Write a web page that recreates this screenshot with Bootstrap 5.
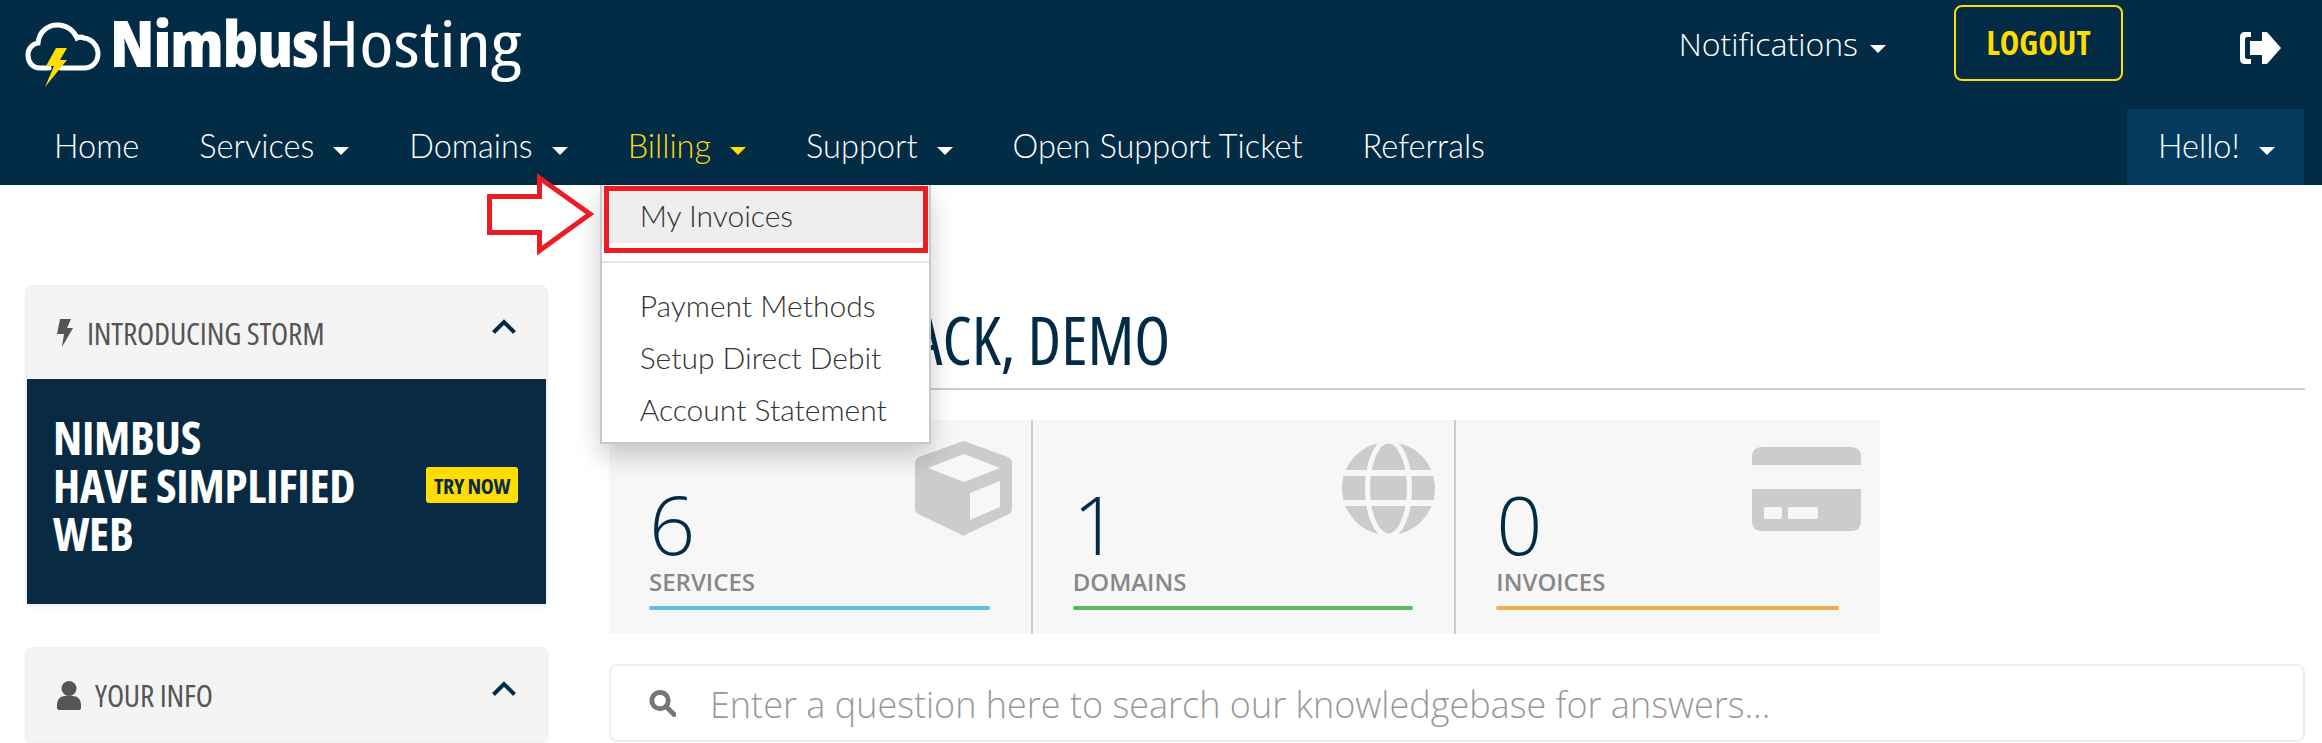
<!DOCTYPE html>
<html lang="en">
<head>
<meta charset="utf-8">
<title>Nimbus Hosting</title>
<link href="https://cdn.jsdelivr.net/npm/bootstrap@5.3.0/dist/css/bootstrap.min.css" rel="stylesheet">
<style>
html,body{height:743px;overflow:hidden;background:#fff}
body{font-family:"Lato","Liberation Sans",sans-serif;position:relative}
.nh-head{background:#022b45;height:185px}
.nh-top{height:108px}
.nh-logo{padding-left:25px;padding-top:22px;gap:9px;height:108px}
.nh-logoname{font-family:"Open Sans",sans-serif;font-stretch:75%;font-size:64px;line-height:60px;color:#fff;margin-top:-9px;white-space:nowrap}
.nh-logobold{display:inline-block;font-weight:800;letter-spacing:-1px;transform:scaleX(1.06);transform-origin:left;margin-right:12px}
.nh-logothin{display:inline-block;font-weight:400;transform:scaleX(1.22);transform-origin:left}
.nh-notify{font-family:"Open Sans",sans-serif;font-weight:300;font-size:32px;color:#fff;text-decoration:none;margin-top:25px;margin-right:68px;line-height:38px}
.nh-notify.dropdown-toggle::after{margin-left:12px}
.dropdown-toggle::after{border-top:8px solid;border-left:8px solid transparent;border-right:8px solid transparent;border-bottom:0;margin-left:19px;vertical-align:3px}
.nh-logout{font-family:"Open Sans",sans-serif;font-stretch:75%;font-weight:700;font-size:33px;color:#ffdd00;border:2px solid #ffdd00;border-radius:8px;width:169px;height:76px;margin-top:5px;margin-right:117px;padding:0;background:transparent;line-height:70px}
.nh-exit{margin-top:32px;margin-right:41px;width:41px;height:32px;display:block}
.nh-navrow{height:77px;padding-left:24px;padding-right:18px}
.nh-navrow .nav-link{font-size:32.5px;font-weight:300;color:#fff;padding:0 30px;line-height:75px;height:76px}
.nh-navrow .nav-link.nh-on{color:#ffdd00}
.nh-navrow .nh-hello{background:#043a5e;width:177px;padding:0 0 0 31px;margin-top:1px;line-height:74px}
.nh-menu.dropdown-menu{left:2px;top:77px;width:331px;height:259px;margin:0;padding:0;border:2px solid #c9c9c9;border-top:0;border-radius:0;box-shadow:0 12px 24px rgba(0,0,0,.2);z-index:20}
.nh-menu .dropdown-item{font-size:30px;font-weight:300;color:#333;padding:0 0 0 38px}
.nh-menu .dropdown-item.nh-hover{background:#eee;height:58px;line-height:60px}
.nh-menu .dropdown-divider{margin:18px 0 0;border-top:2px solid #e5e5e5;opacity:1}
.nh-menu .nh-rest{padding-top:16px}
.nh-menu .nh-rest .dropdown-item{line-height:52px;height:52px}
.nh-body{padding:0 17px 0 25px;gap:61px}
.nh-side{width:523px;flex:none;padding-top:100px}
.nh-card.card{border:2px solid #f0f0f0;border-radius:8px;box-shadow:0 2px 4px rgba(0,0,0,.05);margin-bottom:41px;--bs-card-border-width:0}
.nh-card.card:last-child{margin-bottom:0}
.nh-card .card-header{background:#f4f4f4;height:92px;padding:0 0 0 30px;border:0;border-radius:6px 6px 0 0;font-family:"Open Sans",sans-serif;font-stretch:75%;font-size:31.5px;letter-spacing:-.2px;color:#555;gap:14px}
.nh-chev{margin-left:auto;margin-right:30px;margin-top:-14px}
.nh-banner.card-body{background:#082b43;height:225px;padding:0 28px 14px 26px;color:#fff;border-radius:0}
.nh-bantext{font-family:"Open Sans",sans-serif;font-stretch:75%;font-weight:700;font-size:47px;letter-spacing:-.3px;line-height:48px;white-space:nowrap}
.nh-try{background:#ffdd00;color:#082b43;font-family:"Open Sans",sans-serif;font-stretch:75%;font-weight:700;font-size:22px;letter-spacing:-.4px;width:92px;height:36px;padding:0;line-height:36px;border:0;border-radius:3px;white-space:nowrap}
.nh-main{flex:1;min-width:0}
.nh-title{font-family:"Open Sans",sans-serif;font-stretch:75%;font-weight:400;font-size:68px;line-height:80px;color:#022b45;margin:114px 0 0;border-bottom:2px solid #ccc;height:91px;white-space:nowrap}
.nh-titletext{display:inline-block;transform:scaleX(.97);transform-origin:left;margin-left:25px}
.nh-stats{width:1271px;height:214px;background:#f7f7f7;margin-top:30px;margin-bottom:30px}
.nh-cell{height:214px;padding:0 41px 24px 40px;position:relative;border-right:2px solid #ccc}
.nh-cell:last-child{border-right:0}
.nh-num{font-family:"Open Sans",sans-serif;font-weight:300;font-size:81px;line-height:90px;color:#022b45;margin-bottom:-2px}
.nh-lab{font-family:"Open Sans",sans-serif;font-weight:600;font-size:24px;line-height:30px;color:#888;margin-bottom:9px}
.nh-bar{height:4px;border-radius:2px}
.nh-ico{position:absolute;top:21px;right:19px;fill:#ccc}
.nh-ico.nh-lower{top:27px}
.nh-search{border:2px solid #eee;border-radius:8px;height:78px;padding-left:38px;gap:34px}
.nh-search .form-control{border:0;background:transparent;padding:2px 0 0;font-family:"Open Sans",sans-serif;font-weight:300;font-size:36px;box-shadow:none;height:74px}
.nh-search .form-control::placeholder{color:#999}
.nh-redbox{position:absolute;left:604px;top:186px;width:324px;height:67px;border:5px solid #ed1c24;z-index:30}
.nh-arrow{position:absolute;left:485px;top:172px;z-index:30}
</style>
</head>
<body>
<header class="nh-head">
  <div class="nh-top d-flex">
    <a class="nh-logo d-flex align-items-start text-decoration-none me-auto" href="#">
      <svg width="76" height="66" viewBox="0 0 76 66" aria-hidden="true"><path d="M24 46H15C8 46 3 41 3 33C3 27 7 22 13 21C14 10 23 2 34 3C43 4 49 9 52 16C54 15 57 15 59 16C67 17 73 24 73 32C73 40 67 46 59 46H36" fill="none" stroke="#fff" stroke-width="5" stroke-linecap="round"/><path d="M31 26H42L35 38H42L20 65L29 44H21Z" fill="#ffdd00"/></svg>
      <span class="nh-logoname"><span class="nh-logobold">Nimbus</span><span class="nh-logothin">Hosting</span></span>
    </a>
    <a class="nh-notify dropdown-toggle" href="#">Notifications</a>
    <button class="btn nh-logout" type="button">LOGOUT</button>
    <svg class="nh-exit" viewBox="0 0 41 32" aria-hidden="true"><path d="M11 0H5C2 0 0 2 0 5V27C0 30 2 32 5 32H11V27H7C6 27 5 26 5 25V7C5 6 6 5 7 5H11Z" fill="#fff"/><path d="M10 9H22V0H27L41 16L27 32H22V23H10Z" fill="#fff"/></svg>
  </div>
  <div class="nh-navrow d-flex">
    <ul class="nav me-auto">
      <li class="nav-item"><a class="nav-link" href="#">Home</a></li>
      <li class="nav-item"><a class="nav-link dropdown-toggle" href="#">Services</a></li>
      <li class="nav-item"><a class="nav-link dropdown-toggle" href="#">Domains</a></li>
      <li class="nav-item dropdown">
        <a class="nav-link nh-on dropdown-toggle" href="#">Billing</a>
        <div class="dropdown-menu show nh-menu">
          <a class="dropdown-item nh-hover" href="#">My Invoices</a>
          <hr class="dropdown-divider">
          <div class="nh-rest">
            <a class="dropdown-item" href="#">Payment Methods</a>
            <a class="dropdown-item" href="#">Setup Direct Debit</a>
            <a class="dropdown-item" href="#">Account Statement</a>
          </div>
        </div>
      </li>
      <li class="nav-item"><a class="nav-link dropdown-toggle" href="#">Support</a></li>
      <li class="nav-item"><a class="nav-link" href="#">Open Support Ticket</a></li>
      <li class="nav-item"><a class="nav-link" href="#">Referrals</a></li>
    </ul>
    <a class="nav-link nh-hello dropdown-toggle" href="#">Hello!</a>
  </div>
</header>

<div class="nh-body d-flex">
  <aside class="nh-side">
    <div class="card nh-card">
      <div class="card-header d-flex align-items-center">
        <svg width="16" height="28" viewBox="0 0 16 28" fill="#555" aria-hidden="true"><path d="M3 0H14L10 9H16L5 28L7 15H0Z"/></svg>
        <span>INTRODUCING STORM</span>
        <svg class="nh-chev" width="24" height="15" viewBox="0 0 24 15" fill="none" stroke="#022b45" stroke-width="4" aria-hidden="true"><path d="M1.500 13.500L12 3L22.500 13.500"/></svg>
      </div>
      <div class="card-body nh-banner d-flex align-items-center justify-content-between">
        <div class="nh-bantext">NIMBUS<br>HAVE SIMPLIFIED<br>WEB</div>
        <button class="btn nh-try" type="button">TRY NOW</button>
      </div>
    </div>
    <div class="card nh-card">
      <div class="card-header d-flex align-items-center">
        <svg width="24" height="29" viewBox="0 0 24 29" fill="#555" aria-hidden="true"><circle cx="12" cy="7.500" r="7.500"/><path d="M0 24C0 18 4 15 8 15H16C20 15 24 18 24 24V27C24 28 23 29 22 29H2C1 29 0 28 0 27Z"/></svg>
        <span>YOUR INFO</span>
        <svg class="nh-chev" width="24" height="15" viewBox="0 0 24 15" fill="none" stroke="#022b45" stroke-width="4" aria-hidden="true"><path d="M1.500 13.500L12 3L22.500 13.500"/></svg>
      </div>
    </div>
  </aside>

  <main class="nh-main">
    <h1 class="nh-title"><span class="nh-titletext">WELCOME BACK, DEMO</span></h1>
    <div class="row g-0 nh-stats">
      <div class="col-4 nh-cell d-flex flex-column justify-content-end">
        <svg class="nh-ico" width="97" height="95" viewBox="0 0 97 95" aria-hidden="true"><path fill-rule="evenodd" d="M44 1.500Q48.500-1 53 1.500L93 16Q97 18 97 22V67Q97 71 94 73L52 93Q48.500 96 45 93L3 73Q0 71 0 67V22Q0 18 4 16ZM13 27L49 41L85 27L49 13ZM55 52V79L85 66V40Z"/></svg>
        <div class="nh-num">6</div>
        <div class="nh-lab">SERVICES</div>
        <div class="nh-bar" style="background:#5bc0de"></div>
      </div>
      <div class="col-4 nh-cell d-flex flex-column justify-content-end">
        <svg class="nh-ico" width="93" height="95" viewBox="0 0 93 95" aria-hidden="true"><circle cx="46.500" cy="47.500" r="46.500"/><g fill="none" stroke="#f7f7f7"><path stroke-width="6" d="M0 32H93M0 62H93"/><ellipse cx="46.500" cy="47.500" rx="21" ry="47.500" stroke-width="5"/></g></svg>
        <div class="nh-num">1</div>
        <div class="nh-lab">DOMAINS</div>
        <div class="nh-bar" style="background:#5cb85c"></div>
      </div>
      <div class="col-4 nh-cell d-flex flex-column justify-content-end">
        <svg class="nh-ico nh-lower" width="109" height="84" viewBox="0 0 109 84" aria-hidden="true"><path fill-rule="evenodd" d="M10 0H99Q109 0 109 10V18H0V10Q0 0 10 0ZM0 42H109V74Q109 84 99 84H10Q0 84 0 74ZM14 60Q12 60 12 62V70Q12 72 14 72H28Q30 72 30 70V62Q30 60 28 60ZM38 60Q36 60 36 62V70Q36 72 38 72H64Q66 72 66 70V62Q66 60 64 60Z"/></svg>
        <div class="nh-num">0</div>
        <div class="nh-lab">INVOICES</div>
        <div class="nh-bar" style="background:#f0ad4e"></div>
      </div>
    </div>
    <div class="nh-search d-flex align-items-center">
      <svg width="28" height="28" viewBox="0 0 28 28" fill="none" stroke="#777" aria-hidden="true"><circle cx="11.500" cy="11.500" r="8.500" stroke-width="5"/><path d="M18 18L26 26" stroke-width="5" stroke-linecap="round"/></svg>
      <input class="form-control" type="text" placeholder="Enter a question here to search our knowledgebase for answers...">
    </div>
  </main>
</div>

<div class="nh-redbox"></div>
<svg class="nh-arrow" width="110" height="84" viewBox="0 0 110 84" aria-hidden="true"><path d="M4.500 24.500H54.500V6L105 42L54.500 78.500V60.500H4.500Z" fill="#fff" stroke="#ed1c24" stroke-width="5"/></svg>

<script src="https://cdn.jsdelivr.net/npm/bootstrap@5.3.0/dist/js/bootstrap.bundle.min.js"></script>
</body>
</html>
